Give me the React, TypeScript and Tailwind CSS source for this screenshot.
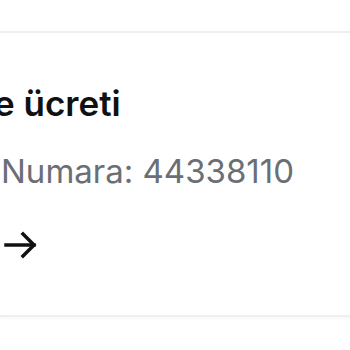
export default function App() {
    return (
        <div className="w-[350px] h-[350px] bg-white overflow-hidden pt-[31px]" style={{ fontFamily: "Inter, 'Noto Sans', sans-serif" }}>
            <div className="border-y-2 border-[#efefef] h-[286px] shadow-[0_2px_3px_rgba(0,0,0,0.03)]">
                <div className="pt-[50px]">
                    {/* Title */}
                    <h2 className="-ml-[6px] text-[35px] leading-[40px] font-semibold text-[#111] whitespace-nowrap">
                        e ücreti
                    </h2>

                    {/* Number */}
                    <p className="mt-[28px] ml-[1px] text-[33px] leading-[40px] text-[#6b6f75] whitespace-nowrap">
                        Numara: 44338110
                    </p>

                    {/* Arrow */}
                    <div className="mt-[38px] ml-[3px]">
                        <svg width="36" height="32" viewBox="0 0 36 32" fill="none" stroke="#111" strokeWidth="3.5" strokeLinecap="square" strokeLinejoin="miter">
                            <line x1="3" y1="16" x2="31" y2="16" />
                            <polyline points="20,5 31,16 20,27" />
                        </svg>
                    </div>
                </div>
            </div>
        </div>
    );
}
